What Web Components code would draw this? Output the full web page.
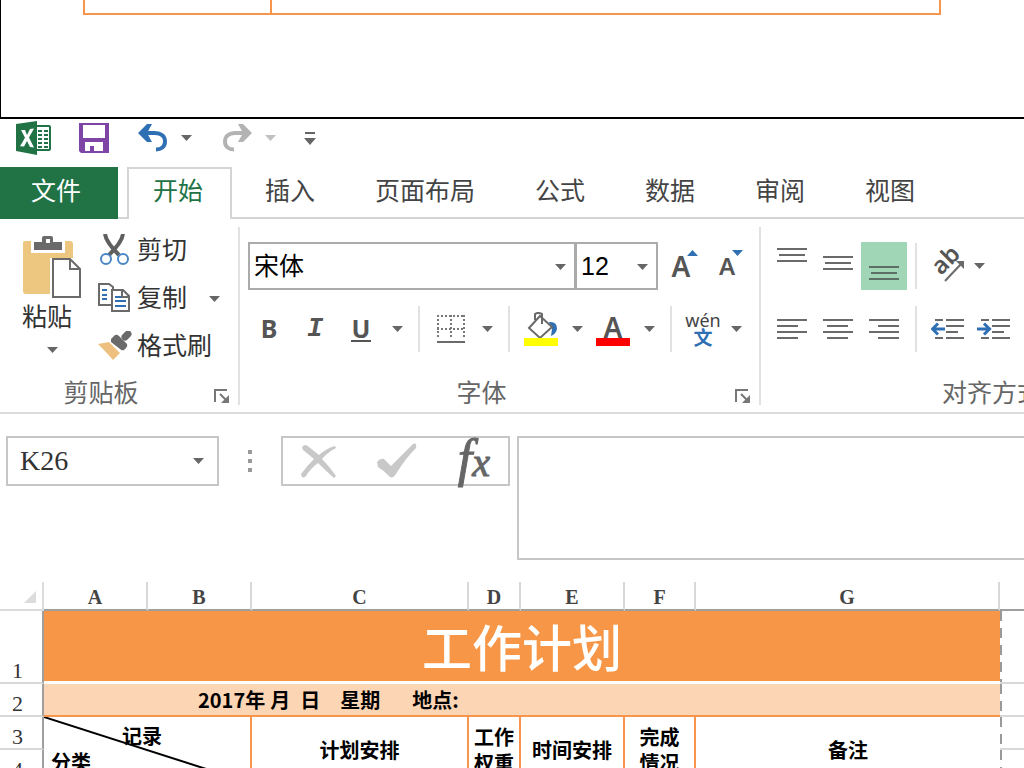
<!DOCTYPE html>
<html lang="zh-CN">
<head>
<meta charset="utf-8">
<title>工作计划</title>
<style>
  body { margin: 0; background: #fff; color: #333; font-family: "Liberation Sans", "Noto Sans CJK SC", sans-serif; font-size: 25px; }
</style>
</head>
<body>
<xl-app></xl-app>
<script>
const reset = `
  * { box-sizing: border-box; }
  button, input, textarea, select { font: inherit; color: inherit; background: none; border: 0; margin: 0; padding: 0; border-radius: 0; outline: 0; }
  button { cursor: pointer; }
  svg { display: block; }
`;
function define(tag, render) {
  customElements.define(tag, class extends HTMLElement {
    constructor() { super(); this.attachShadow({ mode: 'open' }); }
    connectedCallback() { this.shadowRoot.innerHTML = `<style>${reset}</style>` + render(this); }
  });
}

const lines = (w, h, rows, color = '#6a6a6a') =>
  `<svg width="${w}" height="${h}" viewBox="0 0 ${w} ${h}" shape-rendering="crispEdges">` +
  rows.map(([x, y, l]) => `<rect x="${x}" y="${y}" width="${l}" height="2" fill="${color}"/>`).join('') + '</svg>';

const outArrow = '<path d="M14 11H2M7 5.500L1.500 11L7 16.500" fill="none" stroke="#2f70b5" stroke-width="3"/>';
const inArrow = '<path d="M0 11H11M7 5.500L12.500 11L7 16.500" fill="none" stroke="#2f70b5" stroke-width="3"/>';
const indentLines = '<g fill="#6a6a6a"><path d="M4 1h8v2H4zM15 1h18v2H15zM15 7h18v2H15zM15 13h12v2H15zM4 19h8v2H4zM15 19h18v2H15z"/></g>';

const icons = {
  excel: `<svg width="36" height="34" viewBox="0 0 36 34"><path d="M20 5h13q1 0 1 1v22q0 1-1 1H20z" fill="#fff" stroke="#217346" stroke-width="2"/><path d="M22 9h4v2h-4zM28 9h4v2h-4zM22 13h4v2h-4zM28 13h4v2h-4zM22 17h4v2h-4zM28 17h4v2h-4zM22 21h4v2h-4zM28 21h4v2h-4zM22 25h4v2h-4zM28 25h4v2h-4z" fill="#217346"/><path d="M0 3L21 0V34L0 30z" fill="#217346"/><path d="M5 9l4 0 2 5 3-6 4-.5-5 9 5 10-4-.5-3-6-3 5.500-4-.3 5-8.500z" fill="#fff"/></svg>`,
  save: `<svg width="30" height="30" viewBox="0 0 30 30"><path d="M0 0h30v30H2l-2-2z" fill="#7e45a6"/><path d="M4 2h22v13H4zM6 19h18v9h-9v-5h-4v5H6z" fill="#fff"/></svg>`,
  undo: `<svg width="30" height="28" viewBox="0 0 30 28"><path d="M2 9H17C23 9 27 12 27 17.500C27 23 23 25.500 18 25.500" fill="none" stroke="#2f70b5" stroke-width="4"/><path d="M0 9L9 0H14L9 9L14 18H9z" fill="#2f70b5"/></svg>`,
  redo: `<svg width="30" height="28" viewBox="0 0 30 28"><path d="M28 9H13C7 9 3 12 3 17.500C3 23 7 25.500 12 25.500" fill="none" stroke="#b3b3b3" stroke-width="4"/><path d="M30 9L21 0H16L21 9L16 18H21z" fill="#b3b3b3"/></svg>`,
  custom: `<svg width="12" height="13" viewBox="0 0 12 13"><path d="M1 0h10v2H1zM0 6h12L6 13z" fill="#666"/></svg>`,
  arrow: `<svg width="11" height="6" viewBox="0 0 11 6"><path d="M0 0h11L5.500 6z" fill="currentColor"/></svg>`,
  paste: `<svg width="60" height="64" viewBox="0 0 60 64"><path d="M3 6H48Q51 6 51 9V23H28V59H4Q1 59 1 56V8Q1 6 3 6z" fill="#edc77f"/><path d="M9 4h34v14H9z" fill="#fff"/><path d="M12 7H20V3Q20 1 22 1H29Q31 1 31 3V7H40V15H12z" fill="#6a6a6a"/><path d="M24 4h4v4h-4z" fill="#fff"/><path d="M31 24H48L58 34V62H31z" fill="#fff" stroke="#6a6a6a" stroke-width="2"/><path d="M48 24V34H58" fill="none" stroke="#6a6a6a" stroke-width="2"/></svg>`,
  cut: `<svg width="32" height="32" viewBox="0 0 32 32"><path d="M7 0Q8 8 21 21M25 0Q24 8 11 21" fill="none" stroke="#5f5f5f" stroke-width="4"/><g fill="#fff" stroke="#4a86c5" stroke-width="2"><circle cx="8" cy="25" r="5"/><circle cx="25" cy="25" r="5"/></g></svg>`,
  copy: `<svg width="32" height="30" viewBox="0 0 32 30"><path d="M1 1H11L15 4V22H1z" fill="#fff" stroke="#6a6a6a" stroke-width="2"/><path d="M4 7h5M4 12h5M4 16h5" stroke="#2f70b5" stroke-width="2"/><path d="M14 7H25L31 13V28H14z" fill="#fff" stroke="#6a6a6a" stroke-width="2"/><path d="M24 7V14H31" fill="none" stroke="#6a6a6a" stroke-width="2"/><path d="M17 14h6M17 18h11M17 23h11" stroke="#2f70b5" stroke-width="2"/></svg>`,
  brush: `<svg width="34" height="30" viewBox="0 0 34 30"><path d="M0 13L11 11L22 22L15 29Q9 22 0 13z" fill="#edc07f"/><path d="M13 8L17 4Q19 3 21 5L29 13Q30 15 28 17L26 19Q24 20 22 18L13 11z" fill="#6a6a6a"/><path d="M27 6L30 3" stroke="#6a6a6a" stroke-width="7" stroke-linecap="round"/></svg>`,
  launcher: `<svg width="16" height="15" viewBox="0 0 16 15"><path d="M1 13V1H13M6 5L12 11" fill="none" stroke="#777" stroke-width="2"/><path d="M15 6V14H7z" fill="#777"/></svg>`,
  borders: `<svg width="28" height="28" viewBox="0 0 28 28"><path d="M0 1H28M0 14H28M1 0V24M14 0V24M27 0V24" fill="none" stroke="#777" stroke-width="2" stroke-dasharray="2 2"/><path d="M0 26h28v2H0z" fill="#6a6a6a"/></svg>`,
  fill: `<svg width="34" height="34" viewBox="0 0 34 34"><path d="M25 10Q33 9 33 17Q32 22 27 24L28 17z" fill="#2f70b5"/><path d="M16 4L28 15L16 26L5 16z" fill="#fff" stroke="#6a6a6a" stroke-width="2"/><path d="M11 8V2Q14 0 18 2V12" fill="none" stroke="#6a6a6a" stroke-width="2"/><path d="M0 26h34v8H0z" fill="#ff0"/></svg>`,
  top: lines(30, 48, [[0, 6, 30], [2, 12, 26], [0, 18, 30]]),
  middle: lines(30, 48, [[0, 14, 30], [2, 20, 26], [0, 26, 30]]),
  bottom: lines(30, 48, [[0, 24, 30], [2, 30, 26], [0, 36, 30]], '#5c6f64'),
  left: lines(30, 22, [[0, 1, 30], [0, 7, 21], [0, 13, 30], [0, 19, 21]]),
  center: lines(30, 22, [[0, 1, 30], [4, 7, 21], [0, 13, 30], [4, 19, 21]]),
  right: lines(30, 22, [[0, 1, 30], [9, 7, 21], [0, 13, 30], [9, 19, 21]]),
  orient: `<svg width="34" height="34" viewBox="0 0 34 34"><text x="0" y="0" transform="translate(10 27) rotate(-45)" font-family="Noto Sans" font-size="24" font-weight="600" fill="#555">ab</text><path d="M14 32L30 15" stroke="#6a6a6a" stroke-width="2"/><path d="M25 12H33V20z" fill="#6a6a6a"/></svg>`,
  outdent: `<svg width="34" height="22" viewBox="0 0 34 22">${indentLines}${outArrow}</svg>`,
  indent: `<svg width="34" height="22" viewBox="0 0 34 22">${indentLines}${inArrow}</svg>`,
  cancel: `<svg width="36" height="34" viewBox="0 0 36 34"><path d="M1 3Q4-1 8 3L18 11Q26 4 34 2L35 4Q27 8 21 15Q29 23 35 32L33 34Q25 27 17 19Q9 25 5 32Q1 36 0 30Q6 22 13 15L2 6z" fill="#c8c8c8"/></svg>`,
  accept: `<svg width="40" height="36" viewBox="0 0 40 36"><path d="M0 19Q3 15 7 16L14 23L36 1Q40-1 39 5Q28 16 19 31Q15 37 12 33Q6 27 1 24z" fill="#c8c8c8"/></svg>`
};

define('xl-icon', el => `<style>:host{display:block;flex:none}</style>${icons[el.getAttribute('name')]}`);

define('tool-button', el => `
  <style>
    :host { display: flex; flex: none; }
    button { width: 46px; height: 48px; display: flex; align-items: center; justify-content: center; }
    :host([pressed]) button { background: #a0d6b6; }
    :host([arrow]) button { width: var(--arrow-width, 26px); color: #666; }
    :host([bare]) button { width: auto; height: auto; }
  </style>
  <button type="button" aria-label="${el.getAttribute('label')}">${el.hasAttribute('arrow') ? icons.arrow : '<slot></slot>'}</button>`);

define('tool-separator', () => `<style>:host{display:block;flex:none;width:2px;height:46px;margin:0 8px;background:#e1e1e1}</style>`);

define('previous-sheet', () => `
  <style>
    :host { display: block; height: 119px; padding: 0 83px 0 82px; border-left: 1px solid #000; border-bottom: 2px solid #000; }
    table { width: 100%; table-layout: fixed; border-collapse: collapse; }
    td { height: 14px; padding: 0; border: 2px solid #f6954b; border-top: 0; }
    col:first-child { width: 187px; }
  </style>
  <table aria-label="上一页表格"><colgroup><col><col></colgroup><tbody><tr><td></td><td></td></tr></tbody></table>`);

define('quick-access', () => `
  <style>
    :host { display: flex; align-items: center; height: 48px; padding: 0 16px 10px; }
    .save { margin-left: 27px; } .undo { margin-left: 29px; } .redo { margin-left: 18px; } .custom { margin-left: 16px; }
  </style>
  <xl-icon name="excel"></xl-icon>
  <tool-button class="save" bare label="保存"><xl-icon name="save"></xl-icon></tool-button>
  <tool-button class="undo" bare label="撤消"><xl-icon name="undo"></xl-icon></tool-button>
  <tool-button arrow label="撤消选项" style="--arrow-width:36px"></tool-button>
  <tool-button class="redo" bare label="重做"><xl-icon name="redo"></xl-icon></tool-button>
  <tool-button arrow label="重做选项" style="--arrow-width:36px;opacity:.4"></tool-button>
  <tool-button class="custom" bare label="自定义快速访问工具栏"><xl-icon name="custom"></xl-icon></tool-button>`);

define('ribbon-tab', () => `
  <style>
    :host { display: block; flex: none; }
    button { height: 50px; padding: 0 30px 6px; white-space: nowrap; color: #444; }
    :host([file]) button { width: 118px; height: 52px; padding: 0 24px 8px 18px; background: #217346; color: #fff; }
    :host([selected]) button { height: 52px; padding: 0 27px 10px 24px; margin: 0 3px 0 9px; color: #217346; background: #fff; border: 2px solid #d4d4d4; border-bottom: 0; }
  </style>
  <button type="button" role="tab"><slot></slot></button>`);

define('ribbon-tabs', () => `
  <style>
    :host { display: block; overflow: hidden; }
    div { display: flex; align-items: flex-start; height: 52px; background: linear-gradient(#d4d4d4, #d4d4d4) bottom / 100% 2px no-repeat; }
  </style>
  <div role="tablist">
    <ribbon-tab file>文件</ribbon-tab><ribbon-tab selected>开始</ribbon-tab><ribbon-tab>插入</ribbon-tab><ribbon-tab>页面布局</ribbon-tab><ribbon-tab>公式</ribbon-tab><ribbon-tab>数据</ribbon-tab><ribbon-tab>审阅</ribbon-tab><ribbon-tab>视图</ribbon-tab>
  </div>`);

define('ribbon-group', el => `
  <style>
    :host { display: flex; flex-direction: column; flex: none; height: 178px; border-right: 2px solid #e1e1e1; }
    .body { flex: 1; min-height: 0; }
    footer { display: flex; align-items: center; height: 24px; line-height: 24px; color: #666; padding-right: 8px; }
    span { flex: 1; text-align: center; }
    tool-button { padding: 6px 0 0 12px; }
  </style>
  <div class="body"><slot></slot></div>
  <footer><span>${el.getAttribute('label')}</span>${el.hasAttribute('launcher') ? '<tool-button bare label="更多选项"><xl-icon name="launcher"></xl-icon></tool-button>' : ''}</footer>`);

define('clipboard-tools', () => `
  <style>
    :host { display: flex; width: 238px; padding-left: 22px; gap: 16px; }
    .paste { display: flex; flex-direction: column; align-items: flex-start; width: 60px; padding-top: 8px; line-height: 36px; color: #333; }
    .arrow { align-self: center; color: #666; padding-top: 12px; }
    ul { list-style: none; margin: 0; padding: 0; width: 122px; }
    li { display: flex; justify-content: space-between; height: 48px; margin: 0; }
    li button { display: flex; align-items: center; height: 46px; white-space: nowrap; color: #333; }
    li xl-icon { width: 39px; }
    li span { padding-bottom: 4px; }
  </style>
  <button class="paste" type="button"><xl-icon name="paste"></xl-icon><span>粘贴</span><xl-icon class="arrow" name="arrow"></xl-icon></button>
  <ul>
    <li><button type="button"><xl-icon name="cut"></xl-icon><span>剪切</span></button></li>
    <li><button type="button"><xl-icon name="copy"></xl-icon><span>复制</span></button><tool-button arrow label="复制选项" style="--arrow-width:12px"></tool-button></li>
    <li><button type="button"><xl-icon name="brush"></xl-icon><span>格式刷</span></button></li>
  </ul>`);

define('combo-box', el => `
  <style>
    :host { display: flex; flex: none; position: relative; width: var(--combo-width); height: 48px; border: 2px solid #ababab; color: #000; }
    select { appearance: none; width: 100%; height: 100%; padding-left: 4px; background: #fff; }
    xl-icon { position: absolute; right: 8px; top: 20px; color: #666; pointer-events: none; }
  </style>
  <select aria-label="${el.getAttribute('label')}"><option>${el.getAttribute('value')}</option></select><xl-icon name="arrow"></xl-icon>`);

define('font-tools', () => `
  <style>
    :host { display: block; width: 519px; padding: 15px 0 0 6px; color: #555; }
    div { display: flex; align-items: center; height: 48px; }
    .sizes { padding-left: 2px; }
    .styles { margin-top: 15px; }
    .letter { font: 700 25px/24px "Noto Sans", sans-serif; padding-bottom: 2px; }
    .italic { font: italic 700 27px/26px "Liberation Mono", monospace; }
    .under { padding: 0 1px; border-bottom: 2px solid #555; }
    .grow, .shrink { position: relative; font: 600 28px/32px "Noto Sans", sans-serif; }
    .shrink { font-size: 24px; }
    .tip { position: absolute; right: -8px; top: 0; color: #2f70b5; }
    .up { transform: rotate(180deg); }
    .color { display: flex; flex-direction: column; align-items: center; width: 34px; height: 34px; border-bottom: 8px solid #f00; font: 600 28px/30px "Noto Sans", sans-serif; }
    .phonetic { display: flex; flex-direction: column; align-items: center; font: 18px/16px "Noto Sans", sans-serif; color: #444; }
    .phonetic b { font: 700 19px/18px "Noto Sans CJK SC", sans-serif; color: #2f70b5; }
  </style>
  <div class="sizes">
    <combo-box label="字体" value="宋体" style="--combo-width:328px"></combo-box>
    <combo-box label="字号" value="12" style="--combo-width:83px;margin-left:-1px"></combo-box>
    <tool-button label="增大字号"><span class="grow">A<xl-icon class="tip up" name="arrow"></xl-icon></span></tool-button>
    <tool-button label="减小字号"><span class="shrink">A<xl-icon class="tip" name="arrow"></xl-icon></span></tool-button>
  </div>
  <div class="styles">
    <tool-button label="加粗"><span class="letter">B</span></tool-button>
    <tool-button label="倾斜"><span class="italic">I</span></tool-button>
    <tool-button label="下划线"><span class="letter under">U</span></tool-button>
    <tool-button arrow label="下划线选项"></tool-button>
    <tool-separator></tool-separator>
    <tool-button label="边框"><xl-icon name="borders"></xl-icon></tool-button><tool-button arrow label="边框选项"></tool-button>
    <tool-separator></tool-separator>
    <tool-button label="填充颜色"><xl-icon name="fill"></xl-icon></tool-button><tool-button arrow label="填充颜色选项"></tool-button>
    <tool-button label="字体颜色"><span class="color">A</span></tool-button><tool-button arrow label="字体颜色选项"></tool-button>
    <tool-separator></tool-separator>
    <tool-button label="拼音"><span class="phonetic">wén<b>文</b></span></tool-button><tool-button arrow label="拼音选项" style="--arrow-width:20px"></tool-button>
  </div>`);

define('align-tools', () => `
  <style>
    :host { display: block; width: 470px; padding: 15px 0 0 8px; }
    div { display: flex; align-items: center; height: 48px; }
    div + div { margin-top: 15px; }
  </style>
  <div>
    <tool-button label="顶端对齐"><xl-icon name="top"></xl-icon></tool-button><tool-button label="垂直居中"><xl-icon name="middle"></xl-icon></tool-button><tool-button pressed label="底端对齐"><xl-icon name="bottom"></xl-icon></tool-button>
    <tool-separator></tool-separator>
    <tool-button label="方向"><xl-icon name="orient"></xl-icon></tool-button><tool-button arrow label="方向选项" style="--arrow-width:16px"></tool-button>
  </div>
  <div>
    <tool-button label="左对齐"><xl-icon name="left"></xl-icon></tool-button><tool-button label="居中"><xl-icon name="center"></xl-icon></tool-button><tool-button label="右对齐"><xl-icon name="right"></xl-icon></tool-button>
    <tool-separator></tool-separator>
    <tool-button label="减少缩进量"><xl-icon name="outdent"></xl-icon></tool-button><tool-button label="增加缩进量"><xl-icon name="indent"></xl-icon></tool-button>
  </div>`);

define('xl-ribbon', () => `
  <style>:host { display: flex; overflow: hidden; padding: 8px 0 7px; border-bottom: 2px solid #dadada; }</style>
  <ribbon-group label="剪贴板" launcher><clipboard-tools></clipboard-tools></ribbon-group>
  <ribbon-group label="字体" launcher><font-tools></font-tools></ribbon-group>
  <ribbon-group label="对齐方式"><align-tools></align-tools></ribbon-group>`);

define('formula-bar', () => `
  <style>
    :host { display: flex; align-items: flex-start; padding: 22px 0 22px 6px; }
    .name, .actions { display: flex; align-items: center; height: 50px; border: 2px solid #c6c6c6; }
    .name { width: 213px; padding: 0 12px; color: #666; }
    .name input { flex: 1; min-width: 0; height: 46px; font: 28px "Liberation Serif", serif; color: #333; }
    .dots { width: 62px; height: 50px; display: grid; place-items: center; }
    .actions { width: 229px; padding: 0 18px; justify-content: space-between; color: #666; }
    .fx { font: italic 52px/46px "Liberation Serif", serif; -webkit-text-stroke: 1px #666; }
    .fx small { font-size: 40px; }
    textarea { flex: 1; min-width: 0; height: 124px; margin-left: 7px; padding: 8px; border: 2px solid #c6c6c6; border-right: 0; resize: none; }
  </style>
  <div class="name"><input aria-label="名称框" value="K26"><tool-button arrow label="名称列表" style="--arrow-width:14px"></tool-button></div>
  <div class="dots"><svg width="4" height="22" viewBox="0 0 4 22"><path d="M0 0h4v4H0zM0 9h4v4H0zM0 18h4v4H0z" fill="#999"/></svg></div>
  <div class="actions">
    <tool-button bare label="取消"><xl-icon name="cancel"></xl-icon></tool-button>
    <tool-button bare label="输入"><xl-icon name="accept"></xl-icon></tool-button>
    <tool-button bare label="插入函数"><span class="fx">f<small>x</small></span></tool-button>
  </div>
  <textarea aria-label="编辑栏"></textarea>`);

define('work-sheet', () => `
  <style>
    :host { display: block; --line: #f6954b; }
    table { width: 100%; table-layout: fixed; border-collapse: separate; border-spacing: 0; color: #000; }
    th, td { padding: 0; text-align: center; }
    thead th { height: 29px; padding-top: 3px; font: 700 20px/24px "Liberation Serif", serif; color: #444; border-bottom: 2px solid #9f9f9f; border-right: 2px solid #d8d8d8; }
    thead th:last-child { border-right: 0; }
    thead .corner { border-color: #dcdcdc; } .corner svg { margin: 0 0 0 24px; }
    tbody th { vertical-align: bottom; font: 22px/22px "Liberation Serif", serif; color: #333; padding-right: 7px; border-right: 2px solid #9f9f9f; border-bottom: 2px solid #d8d8d8; }
    .tall > * { height: 73px; } .row > * { height: 33px; }
    .title { background: #f79646; color: #fff; border-bottom: 3px solid #fff; padding-bottom: 2px; font: 500 50px/66px "Noto Sans CJK SC", sans-serif; }
    .date { background: #fcd5b4; border-bottom: 2px solid var(--line); text-align: left; padding-left: 154px; font: 700 20px/28px "Noto Sans CJK SC", sans-serif; white-space: nowrap; }
    .date span { margin-right: 10px; } .date .year { margin-right: 5px; } .date .wide { margin-right: 20px; } .date .wider { margin-right: 32px; }
    .head { font: 700 20px/26px "Noto Sans CJK SC", sans-serif; border-right: 2px solid var(--line); }
    .last { border-right: 0; }
    .split { position: relative; text-align: left; vertical-align: top; }
    .split svg { position: absolute; inset: 0; width: 100%; height: 100%; }
    .split span { display: block; padding: 6px 0 0 78px; } .split span + span { padding: 0 0 0 7px; }
    .tail { border-bottom: 2px solid #d8d8d8; background: repeating-linear-gradient(#999 0 10px, #fff 10px 17px) left / 2px 100% no-repeat; }
  </style>
  <table>
    <colgroup><col style="width:44px"><col style="width:104px"><col style="width:104px"><col style="width:217px"><col style="width:52px"><col style="width:104px"><col style="width:71px"><col style="width:304px"><col></colgroup>
    <thead><tr><th class="corner" aria-label="全选"><svg width="12" height="12" viewBox="0 0 12 12"><path d="M12 0V12H0z" fill="#dcdcdc"/></svg></th><th>A</th><th>B</th><th>C</th><th>D</th><th>E</th><th>F</th><th>G</th><th></th></tr></thead>
    <tbody>
      <tr class="tall"><th>1</th><td class="title" colspan="7">工作计划</td><td class="tail"></td></tr>
      <tr class="row"><th>2</th><td class="date" colspan="7"><span class="year">2017年</span><span>月</span><span class="wide">日</span><span class="wider">星期</span>地点:</td><td class="tail"></td></tr>
      <tr class="row"><th>3</th>
        <td class="head split" colspan="2" rowspan="2"><svg viewBox="0 0 208 66" preserveAspectRatio="none"><path d="M0 0L208 66" stroke="#000" stroke-width="2"/></svg><span>记录</span><span>分类</span></td>
        <td class="head" rowspan="2">计划安排</td><td class="head" rowspan="2">工作<br>权重</td><td class="head" rowspan="2">时间安排</td><td class="head" rowspan="2">完成<br>情况</td><td class="head last" rowspan="2">备注</td><td class="tail"></td></tr>
      <tr class="row"><th>4</th><td class="tail"></td></tr>
    </tbody>
  </table>`);

define('xl-app', () => `
  <style>:host { display: block; height: 100vh; overflow: hidden; }</style>
  <previous-sheet></previous-sheet>
  <quick-access></quick-access>
  <ribbon-tabs></ribbon-tabs>
  <xl-ribbon></xl-ribbon>
  <formula-bar></formula-bar>
  <work-sheet></work-sheet>`);
</script>
</body>
</html>
